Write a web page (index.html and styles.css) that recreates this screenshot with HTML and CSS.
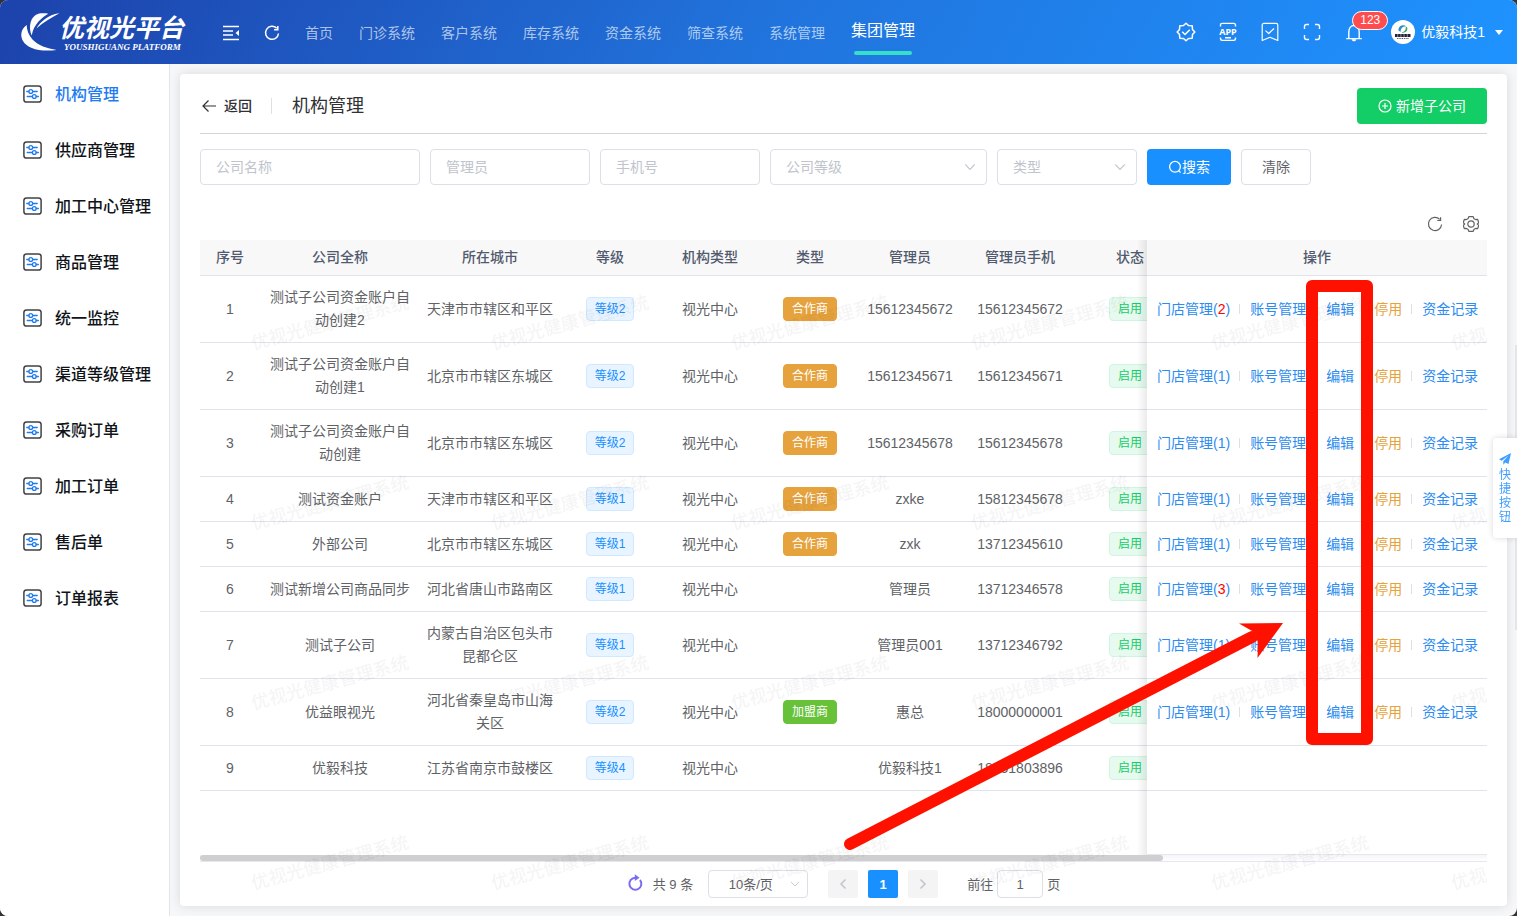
FILE: index.html
```html
<!DOCTYPE html>
<html lang="zh-CN">
<head>
<meta charset="utf-8">
<title>机构管理</title>
<link rel="stylesheet" href="styles.css">
</head>
<body>
<svg class="defs" width="0" height="0" aria-hidden="true">
  <symbol id="i-menu" viewBox="0 0 19 18"><rect x="0.9" y="0.9" width="17.200" height="16.200" rx="2.600" fill="none" stroke="currentColor" stroke-width="1.500"/><g fill="none" stroke="#1f7cf0" stroke-width="1.300" stroke-linecap="round"><path d="M3.800 6.500h2M9.800 6.500h4.400M4.300 11.500h5M13.300 11.500h2"/><circle cx="7.800" cy="6.500" r="1.900"/><circle cx="11.300" cy="11.500" r="1.900"/></g></symbol>
  <symbol id="i-down" viewBox="0 0 12 12"><path d="M1.200 3.400 6 8.400l4.800-5" fill="none" stroke="currentColor" stroke-width="1.1"/></symbol>
  <symbol id="i-refresh" viewBox="0 0 16 16"><path d="M12.700 3.300A6.600 6.600 0 1 0 14.600 8.500M13.600 1.200v3.300h-3.300" fill="none" stroke="currentColor" stroke-width="1.200"/></symbol>
</svg>

<div class="window">
  <header class="topbar">
    <a class="logo" href="#" aria-label="优视光平台">
      <svg class="logo-mark" width="39" height="39" viewBox="0 0 39 39" aria-hidden="true">
        <g fill="#fff"><path d="M6.700 12C1.500 15.500-.5 22 3 28 7.500 35.500 19 39 36.700 37 27 35.500 18 32.500 12.500 26.500 8.500 22 6.800 17 6.700 12z"/><path d="M11.700 22.500C8 14 10.500 3 18.300.8c3.500-.8 7-.6 10-.1C22 4.500 14 10.500 11.700 22.500z"/><path d="M16.500 15.500C20 9 28.500 1.500 39.300.3 31.500 4.500 23.500 9 16.500 15.500z"/></g>
      </svg>
      <span class="logo-text"><span class="logo-cn">优视光平台</span><span class="logo-en">YOUSHIGUANG PLATFORM</span></span>
    </a>
    <div class="tools">
      <button class="icon-btn" aria-label="收起菜单"><svg width="16" height="16" viewBox="0 0 16 16"><path d="M0 1.500h16M0 6h10M0 10h10M0 14.500h16" stroke="currentColor" stroke-width="1.300" fill="none"/><path d="M16 5v6l-3.500-3z" fill="currentColor"/></svg></button>
      <button class="icon-btn" aria-label="刷新"><svg width="16" height="16" viewBox="0 0 16 16"><path d="M12.700 3.300A6.500 6.500 0 1 0 14.500 8.500M13.800 1v3.700h-3.700" fill="none" stroke="currentColor" stroke-width="1.500"/></svg></button>
    </div>
    <nav class="nav">
      <a href="#">首页</a><a href="#">门诊系统</a><a href="#">客户系统</a><a href="#">库存系统</a><a href="#">资金系统</a><a href="#">筛查系统</a><a href="#">系统管理</a><a href="#" class="active">集团管理</a>
    </nav>
    <div class="actions">
      <button class="icon-btn" aria-label="认证"><svg width="20" height="20" viewBox="0 0 20 20" fill="none" stroke="currentColor" stroke-width="1.500" stroke-linejoin="round"><path d="M10 1.200 12.500 3.500 16.200 3.800 16.500 7.500 18.800 10 16.500 12.500 16.200 16.200 12.500 16.500 10 18.800 7.500 16.500 3.800 16.200 3.500 12.500 1.200 10 3.500 7.500 3.800 3.800 7.500 3.500z"/><path d="m6.200 9.800 2.800 2.700 4.800-4.800"/></svg></button>
      <button class="icon-btn" aria-label="APP"><svg width="20" height="20" viewBox="0 0 20 20" fill="none" stroke="currentColor" stroke-width="1.400"><path d="M2.500 4.500V3.200C2.500 2 3.200 1.400 4.300 1.400h11.400c1.100 0 1.800.6 1.800 1.800v1.300M2.500 15.500v1.100c0 1.200.7 1.800 1.800 1.800h11.400c1.100 0 1.800-.6 1.800-1.800v-1.100M7 15.700h6"/><text x="10" y="13" text-anchor="middle" class="app-text">APP</text></svg></button>
      <button class="icon-btn" aria-label="收藏"><svg width="20" height="20" viewBox="0 0 20 20" fill="none" stroke="currentColor" stroke-width="1.200" stroke-linejoin="round"><path d="M2.200 18.500V3c0-1 .6-1.600 1.600-1.600h12.400c1 0 1.600.6 1.600 1.600v15.500L10 15.300z"/><path d="m5.500 8.600 3.200 2.900 5.300-5"/></svg></button>
      <button class="icon-btn" aria-label="全屏"><svg width="20" height="20" viewBox="0 0 20 20" fill="none" stroke="currentColor" stroke-width="1.400"><path d="M2.500 7V4.500c0-1.200.8-2 2-2H7M13 2.500h2.500c1.200 0 2 .8 2 2V7M17.500 13v2.500c0 1.200-.8 2-2 2H13M7 17.500H4.500c-1.200 0-2-.8-2-2V13"/></svg></button>
      <button class="icon-btn bell" aria-label="消息"><svg width="20" height="20" viewBox="0 0 20 20" fill="none" stroke="currentColor" stroke-width="1.400"><path d="M4.800 16.500V10c0-3.500 2-6.500 5.200-6.500s5.200 3 5.200 6.500v6.500M2.200 16.600h15.600"/><path d="M10 3.500V1.500"/><path d="M7.600 17.200h4.800c-.3 1.400-1.200 2-2.400 2s-2.100-.6-2.400-2z" fill="currentColor" stroke="none"/></svg><span class="badge">123</span></button>
      <button class="user"><svg width="24" height="24" viewBox="0 0 24 24" aria-hidden="true"><circle cx="12" cy="12" r="12" fill="#fff"/><path d="M7.500 10.500C7 6 12 3.500 15.500 6.500 12 6 9.500 8 9.600 12z" fill="#2d8ecb"/><path d="M16 7c1.500 4-2 6.500-5.500 5.500C13.500 12 15 10 14.800 7z" fill="#3fa66b"/><path d="M4 15.500h16" stroke="#223" stroke-width="3" stroke-dasharray="2.600 .5"/><path d="M6 18.500h12" stroke="#667" stroke-width="1" stroke-dasharray="1.500 .8"/></svg><span>优毅科技1</span><svg class="caret" width="8" height="5" viewBox="0 0 8 5"><path d="M0 0h8L4 5z" fill="currentColor"/></svg></button>
    </div>
  </header>

  <div class="body">
    <aside class="sidebar">
      <a href="#" class="active"><svg width="19" height="18"><use href="#i-menu"/></svg>机构管理</a>
      <a href="#"><svg width="19" height="18"><use href="#i-menu"/></svg>供应商管理</a>
      <a href="#"><svg width="19" height="18"><use href="#i-menu"/></svg>加工中心管理</a>
      <a href="#"><svg width="19" height="18"><use href="#i-menu"/></svg>商品管理</a>
      <a href="#"><svg width="19" height="18"><use href="#i-menu"/></svg>统一监控</a>
      <a href="#"><svg width="19" height="18"><use href="#i-menu"/></svg>渠道等级管理</a>
      <a href="#"><svg width="19" height="18"><use href="#i-menu"/></svg>采购订单</a>
      <a href="#"><svg width="19" height="18"><use href="#i-menu"/></svg>加工订单</a>
      <a href="#"><svg width="19" height="18"><use href="#i-menu"/></svg>售后单</a>
      <a href="#"><svg width="19" height="18"><use href="#i-menu"/></svg>订单报表</a>
    </aside>

    <main class="main">
      <section class="card">
        <div class="page-head">
          <button class="back"><svg width="16" height="14" viewBox="0 0 16 14"><path d="M15 7H2M7.500 1.500 2 7l5.500 5.500" fill="none" stroke="currentColor" stroke-width="1.200"/></svg>返回</button>
          <h1>机构管理</h1>
          <button class="btn add"><svg width="14" height="14" viewBox="0 0 14 14" fill="none" stroke="currentColor" stroke-width="1.200"><circle cx="7" cy="7" r="6"/><path d="M7 4v6M4 7h6"/></svg>新增子公司</button>
        </div>

        <form class="filters">
          <input class="field w-name" type="text" placeholder="公司名称" aria-label="公司名称">
          <input class="field w-user" type="text" placeholder="管理员" aria-label="管理员">
          <input class="field w-user" type="text" placeholder="手机号" aria-label="手机号">
          <div class="select w-level"><select class="field" aria-label="公司等级"><option>公司等级</option></select><svg width="12" height="12"><use href="#i-down"/></svg></div>
          <div class="select w-type"><select class="field" aria-label="类型"><option>类型</option></select><svg width="12" height="12"><use href="#i-down"/></svg></div>
          <button class="btn search" type="button"><svg width="14" height="14" viewBox="0 0 14 14" fill="none" stroke="currentColor" stroke-width="1.300"><circle cx="7" cy="6.800" r="5.400"/><path d="m10.600 10.600 2 2"/></svg>搜索</button>
          <button class="btn clear" type="button">清除</button>
        </form>

        <div class="table-tools">
          <button class="icon-btn" aria-label="刷新列表"><svg width="16" height="16"><use href="#i-refresh"/></svg></button>
          <button class="icon-btn" aria-label="列设置"><svg width="16" height="16" viewBox="0 0 16 16" fill="none" stroke="currentColor" stroke-width="1.200" stroke-linejoin="round"><path d="M5.800.7h4.400l.8 2 1.600.9 2.100-.3 1 3.400L14.300 8l1.400 1.300-1 3.400-2.100-.3-1.600.9-.8 2H5.800l-.8-2-1.600-.9-2.100.3-1-3.400L1.700 8 .3 6.700l1-3.400 2.100.3L5 2.700z"/><circle cx="8" cy="8" r="3.200"/></svg></button>
        </div>

        <div class="data">
          <div class="table-wrap">
            <table class="table">
              <colgroup><col class="c60"><col class="c160"><col class="c140"><col class="c100"><col class="c100"><col class="c100"><col class="c100"><col class="c120"><col class="c100"><col><col class="c340"></colgroup>
              <thead><tr><th>序号</th><th>公司全称</th><th>所在城市</th><th>等级</th><th>机构类型</th><th>类型</th><th>管理员</th><th>管理员手机</th><th>状态</th><th></th><th class="fixed">操作</th></tr></thead>
              <tbody>
                <tr><td>1</td><td>测试子公司资金账户自动创建2</td><td>天津市市辖区和平区</td><td><span class="tag blue">等级2</span></td><td>视光中心</td><td><span class="tag orange">合作商</span></td><td>15612345672</td><td>15612345672</td><td><span class="tag green">启用</span></td><td></td><td class="fixed"><div class="ops"><a href="#">门店管理(<b>2</b>)</a><a href="#">账号管理</a><a href="#">编辑</a><a href="#" class="warn">停用</a><a href="#">资金记录</a></div></td></tr>
                <tr><td>2</td><td>测试子公司资金账户自动创建1</td><td>北京市市辖区东城区</td><td><span class="tag blue">等级2</span></td><td>视光中心</td><td><span class="tag orange">合作商</span></td><td>15612345671</td><td>15612345671</td><td><span class="tag green">启用</span></td><td></td><td class="fixed"><div class="ops"><a href="#">门店管理(1)</a><a href="#">账号管理</a><a href="#">编辑</a><a href="#" class="warn">停用</a><a href="#">资金记录</a></div></td></tr>
                <tr><td>3</td><td>测试子公司资金账户自动创建</td><td>北京市市辖区东城区</td><td><span class="tag blue">等级2</span></td><td>视光中心</td><td><span class="tag orange">合作商</span></td><td>15612345678</td><td>15612345678</td><td><span class="tag green">启用</span></td><td></td><td class="fixed"><div class="ops"><a href="#">门店管理(1)</a><a href="#">账号管理</a><a href="#">编辑</a><a href="#" class="warn">停用</a><a href="#">资金记录</a></div></td></tr>
                <tr><td>4</td><td>测试资金账户</td><td>天津市市辖区和平区</td><td><span class="tag blue">等级1</span></td><td>视光中心</td><td><span class="tag orange">合作商</span></td><td>zxke</td><td>15812345678</td><td><span class="tag green">启用</span></td><td></td><td class="fixed"><div class="ops"><a href="#">门店管理(1)</a><a href="#">账号管理</a><a href="#">编辑</a><a href="#" class="warn">停用</a><a href="#">资金记录</a></div></td></tr>
                <tr><td>5</td><td>外部公司</td><td>北京市市辖区东城区</td><td><span class="tag blue">等级1</span></td><td>视光中心</td><td><span class="tag orange">合作商</span></td><td>zxk</td><td>13712345610</td><td><span class="tag green">启用</span></td><td></td><td class="fixed"><div class="ops"><a href="#">门店管理(1)</a><a href="#">账号管理</a><a href="#">编辑</a><a href="#" class="warn">停用</a><a href="#">资金记录</a></div></td></tr>
                <tr><td>6</td><td>测试新增公司商品同步</td><td>河北省唐山市路南区</td><td><span class="tag blue">等级1</span></td><td>视光中心</td><td></td><td>管理员</td><td>13712346578</td><td><span class="tag green">启用</span></td><td></td><td class="fixed"><div class="ops"><a href="#">门店管理(<b>3</b>)</a><a href="#">账号管理</a><a href="#">编辑</a><a href="#" class="warn">停用</a><a href="#">资金记录</a></div></td></tr>
                <tr><td>7</td><td>测试子公司</td><td>内蒙古自治区包头市昆都仑区</td><td><span class="tag blue">等级1</span></td><td>视光中心</td><td></td><td>管理员001</td><td>13712346792</td><td><span class="tag green">启用</span></td><td></td><td class="fixed"><div class="ops"><a href="#">门店管理(1)</a><a href="#">账号管理</a><a href="#">编辑</a><a href="#" class="warn">停用</a><a href="#">资金记录</a></div></td></tr>
                <tr><td>8</td><td>优益眼视光</td><td>河北省秦皇岛市山海关区</td><td><span class="tag blue">等级2</span></td><td>视光中心</td><td><span class="tag lime">加盟商</span></td><td>惠总</td><td>18000000001</td><td><span class="tag green">启用</span></td><td></td><td class="fixed"><div class="ops"><a href="#">门店管理(1)</a><a href="#">账号管理</a><a href="#">编辑</a><a href="#" class="warn">停用</a><a href="#">资金记录</a></div></td></tr>
                <tr><td>9</td><td>优毅科技</td><td>江苏省南京市鼓楼区</td><td><span class="tag blue">等级4</span></td><td>视光中心</td><td></td><td>优毅科技1</td><td>18251803896</td><td><span class="tag green">启用</span></td><td></td><td class="fixed"></td></tr>
                <tr class="rest"><td colspan="10"></td><td class="fixed"></td></tr>
              </tbody>
            </table>
          </div>
          <div class="scroll-track"><div class="scroll-thumb"></div></div>

          <div class="pager">
            <button class="icon-btn reload" aria-label="重新加载"><svg width="16" height="18" viewBox="0 0 16 18"><path d="M8.500 3.800A6 6 0 1 0 13 6" fill="none" stroke="currentColor" stroke-width="2"/><path d="M7.800.3 12.500 3.700 7.800 7z" fill="currentColor"/></svg></button>
            <span class="total">共 9 条</span>
            <div class="select page-size"><select class="field" aria-label="每页条数"><option>10条/页</option></select><svg width="10" height="10"><use href="#i-down"/></svg></div>
            <button class="page" aria-label="上一页" disabled><svg width="8" height="12" viewBox="0 0 8 12"><path d="M6.500 1.500 2 6l4.500 4.500" fill="none" stroke="currentColor" stroke-width="1.500"/></svg></button>
            <button class="page current">1</button>
            <button class="page" aria-label="下一页" disabled><svg width="8" height="12" viewBox="0 0 8 12"><path d="M1.500 1.500 6 6l-4.500 4.500" fill="none" stroke="currentColor" stroke-width="1.500"/></svg></button>
            <label class="jump">前往<input class="field" type="text" value="1">页</label>
          </div>

          <svg class="watermark" aria-hidden="true">
            <defs><pattern id="wm" width="240" height="180" patternUnits="userSpaceOnUse"><text x="130" y="89" text-anchor="middle" transform="rotate(-15 130 83)">优视光健康管理系统</text></pattern></defs>
            <rect width="100%" height="100%" fill="url(#wm)"/>
          </svg>
        </div>
      </section>
    </main>
  </div>

  <div class="edge-bar"></div>
  <button class="quick"><svg width="12" height="12" viewBox="0 0 12 12"><path d="M12 0 0 6.200l2.800 1.500L9.500 2.500 4.300 8.300v3.500l2-2.300L9.500 11z" fill="currentColor"/></svg><span>快捷按钮</span></button>
  <svg class="marks" width="524" height="574" viewBox="0 0 524 574" aria-hidden="true">
    <rect x="468" y="11" width="55" height="453" fill="none" stroke="#ff1100" stroke-width="12" stroke-linejoin="round"/>
    <path d="M6 569 408 362" stroke="#ff1100" stroke-width="12" stroke-linecap="round"/>
    <path d="M439 348 395 348.500 409 356.500 414 367 413.500 383z" fill="#ff1100"/>
  </svg>
</div>
</body>
</html>
```
FILE: styles.css
```css
* { box-sizing: border-box; }
body {
  margin: 0;
  background: #333;
  font: 14px/23px "Liberation Sans", "Noto Sans CJK SC", sans-serif;
  color: #606266;
}
button, input, select { font: inherit; color: inherit; margin: 0; }
button { border: 0; background: none; padding: 0; cursor: pointer; }
a { color: inherit; text-decoration: none; }
svg { display: block; flex: none; }
.defs { position: absolute; }

.window {
  position: relative;
  display: flex;
  flex-direction: column;
  min-height: 100vh;
  border-radius: 8px;
  overflow: hidden;
  background: #f5f7f9;
}

/* Top bar */
.topbar {
  display: flex;
  align-items: center;
  height: 64px;
  padding: 0 14px 0 20px;
  background: linear-gradient(120deg, #1d42ab, #2173dc, #1e93ff);
  color: #fff;
}
.logo { display: flex; align-items: center; width: 163px; white-space: nowrap; }
.logo-text { display: flex; flex-direction: column; }
.logo-cn { font: italic 700 25px/28px "Noto Sans CJK SC", sans-serif; }
.logo-en { font: italic 700 9px/10px "Liberation Serif", serif; padding: 2px 0 0 5px; }
.icon-btn { display: flex; align-items: center; justify-content: center; }
.tools { display: flex; gap: 25px; margin-left: 40px; padding-top: 2px; }
.nav { display: flex; gap: 26px; margin-left: 25px; height: 64px; }
.nav a { padding-top: 22px; color: rgba(255, 255, 255, .65); white-space: nowrap; }
.nav .active {
  position: relative;
  padding-top: 19px;
  color: #fff;
  font-size: 16px;
}
.nav .active::after {
  content: "";
  position: absolute;
  left: 3px;
  right: 3px;
  top: 51px;
  height: 4px;
  border-radius: 2px;
  background: #36e0c8;
}
.actions { display: flex; align-items: center; gap: 22px; margin-left: auto; }
.app-text { font: 700 9px "Noto Sans", sans-serif; fill: #fff; stroke: none; }
.bell { position: relative; }
.badge {
  position: absolute;
  left: 8px;
  top: -11px;
  height: 19px;
  padding: 0 7px;
  border: 1px solid #fff;
  border-radius: 10px;
  background: #ff4d4f;
  font-size: 12px;
  line-height: 17px;
}
.user { display: flex; align-items: center; gap: 6px; margin-left: 5px; }
.caret { margin-left: 4px; }

/* Side menu */
.body { display: flex; flex: 1; }
.sidebar {
  flex: none;
  width: 170px;
  padding-top: 2px;
  background: #fff;
  border-right: 1px solid #e1e4ee;
}
.sidebar a {
  display: flex;
  align-items: center;
  gap: 13px;
  height: 56px;
  padding-left: 23px;
  color: #101418;
  font-size: 16px;
  font-weight: 500;
}
.sidebar a.active { color: #1f7cf0; }
.sidebar svg { color: #404246; }

/* Content card */
.main { flex: 1; min-width: 0; padding: 10px; display: flex; }
.card {
  flex: 1;
  min-width: 0;
  padding: 14px 20px 8px;
  border-radius: 4px;
  background: #fff;
  box-shadow: 0 0 12px rgba(0, 0, 0, .12);
}
.page-head {
  display: flex;
  align-items: center;
  padding-bottom: 9px;
  border-bottom: 1px solid #d3d5da;
}
.back { display: flex; align-items: center; gap: 7px; color: #303133; padding: 0 19px 0 1px; line-height: 16px; border-right: 1px solid #dcdfe6; font-weight: 500; }
.page-head h1 { margin: 0 auto 0 20px; font-size: 18px; font-weight: 400; color: #303133; }
.btn {
  display: flex;
  align-items: center;
  justify-content: center;
  height: 36px;
  border-radius: 4px;
  color: #fff;
}
.add { width: 130px; gap: 4px; background: #13ce66; }
.search { width: 84px; background: #1890ff; }
.clear { width: 70px; border: 1px solid #dcdfe6; color: #606266; }
.filters { display: flex; gap: 10px; padding-top: 15px; }
.field {
  height: 36px;
  padding: 0 15px;
  border: 1px solid #dcdfe6;
  border-radius: 4px;
  background: #fff;
  outline: 0;
}
.field::placeholder { color: #c0c4cc; opacity: 1; }
.select { position: relative; }
.select .field { width: 100%; appearance: none; color: #c0c4cc; }
.select svg { position: absolute; right: 11px; top: 12px; color: #c0c4cc; pointer-events: none; }
.w-name { width: 220px; }
.w-user { width: 160px; }
.w-level { width: 217px; }
.w-type { width: 140px; }
.table-tools { display: flex; justify-content: flex-end; gap: 20px; padding: 31px 8px 8px; }

/* Table */
.data { position: relative; }
.table-wrap { overflow: hidden; }
.table { width: 1720px; table-layout: fixed; border-spacing: 0; text-align: center; }
.c60 { width: 60px; }
.c100 { width: 100px; }
.c120 { width: 120px; }
.c140 { width: 140px; }
.c160 { width: 160px; }
.c340 { width: 340px; }
.table th {
  height: 36px;
  padding: 0;
  background: #f8f8f9;
  border-bottom: 1px solid #dfe4ec;
  color: #515a6e;
  font-weight: 500;
}
.table td { padding: 10px 6px; border-bottom: 1px solid #dfe4ec; }
.table td:nth-child(2) { padding: 10px; }
.table .fixed { position: sticky; right: 0; background: #fff; padding: 0 10px; }
.table th.fixed { background: #f8f8f9; }
.fixed::before {
  content: "";
  position: absolute;
  left: -10px;
  top: 0;
  bottom: -1px;
  width: 10px;
  background: linear-gradient(to left, rgba(0, 0, 0, .08), transparent);
}
.table .rest td { height: 64px; border-bottom: 0; }
.table .rest .fixed { border-bottom: 1px solid #e6e6f2; }
.tag {
  display: block;
  width: max-content;
  height: 24px;
  margin: 0 auto;
  padding: 0 8px;
  border: 1px solid;
  border-radius: 4px;
  font-size: 12px;
  line-height: 22px;
}
.blue { color: #1890ff; background: #e8f4ff; border-color: #d1e9ff; }
.green { color: #13ce66; background: #e7faf0; border-color: #d0f5e0; }
.orange { color: #fff; background: #e6a23c; border-color: #e6a23c; }
.lime { color: #fff; background: #67c23a; border-color: #67c23a; }
.ops { display: flex; align-items: center; color: #2d8cf0; white-space: nowrap; }
.ops a + a::before {
  content: "";
  display: inline-block;
  width: 1px;
  height: 10px;
  margin: 0 10px 0 9px;
  background: #dcdfe6;
}
.ops b { color: #f00; font-weight: 400; }
.ops .warn { color: #e6a23c; }
.scroll-track { height: 7px; border-bottom: 1px solid #e6e6f2; background: linear-gradient(#f5f5f7, #fff); }
.scroll-thumb { width: 74.8%; height: 6px; border-radius: 3px; background: #cfcfcf; }

/* Pagination */
.pager { display: flex; align-items: center; justify-content: center; padding-top: 8px; font-size: 13px; }
.reload { color: #7a6cf0; margin-right: 10px; padding-bottom: 2px; }
.total { margin-right: 15px; }
.pager .field { height: 28px; }
.page-size { width: 100px; margin-right: 20px; }
.page-size .field { color: #606266; padding: 0 30px 0 15px; text-align: center; }
.page-size svg { top: 9px; right: 8px; }
.page {
  display: flex;
  align-items: center;
  justify-content: center;
  width: 30px;
  height: 28px;
  margin-right: 10px;
  border-radius: 2px;
  background: #f4f4f5;
  color: #c0c4cc;
}
.page.current { background: #1890ff; color: #fff; font-weight: 700; }
.jump { display: flex; align-items: center; gap: 4px; margin-left: 19px; }
.jump .field { width: 46px; padding: 0; text-align: center; }

.watermark { position: absolute; inset: 0; width: 100%; height: 100%; pointer-events: none; }
.watermark text { font: 500 18px "Noto Sans CJK SC", sans-serif; fill: rgba(0, 0, 0, .04); }

/* Floating parts */
.edge-bar {
  position: absolute;
  right: 0;
  top: 345px;
  width: 2px;
  height: 285px;
  background: #e3e5e8;
}
.quick {
  position: absolute;
  right: 0;
  top: 438px;
  width: 24px;
  height: 100px;
  display: flex;
  flex-direction: column;
  align-items: center;
  justify-content: center;
  gap: 3px;
  border-radius: 4px 0 0 4px;
  background: #fff;
  box-shadow: 0 0 6px rgba(0, 0, 0, .15);
  color: #409eff;
}
.quick span { width: 12px; font-size: 12px; line-height: 14px; }
.marks { position: absolute; left: 844px; top: 275px; overflow: visible; pointer-events: none; }
```
